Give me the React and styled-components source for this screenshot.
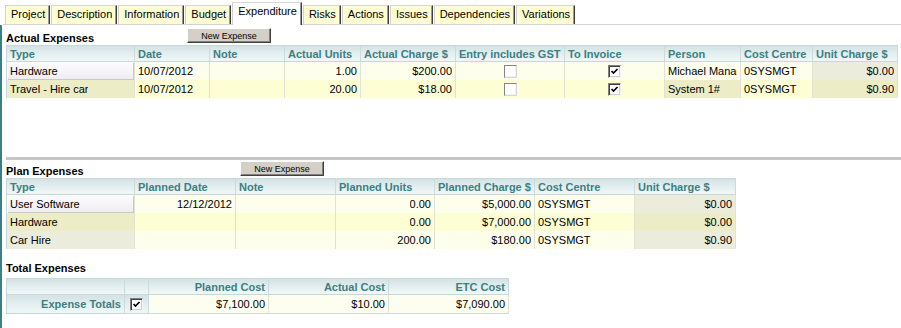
import React from "react";
import styled, { createGlobalStyle } from "styled-components";

const GlobalStyle = createGlobalStyle`
  html, body { margin: 0; padding: 0; background: #fff; }
  body { font-family: "Liberation Sans", Arial, sans-serif; font-size: 11px; color: #000; }
`;

const Page = styled.div`
  width: 901px;
  height: 328px;
  overflow: hidden;
  display: flex;
  flex-direction: column;
`;

const TabBar = styled.div`
  display: flex;
  align-items: flex-end;
  height: 24px;
  margin-left: 3px;
  padding-left: 2px;
  border-bottom: 1px solid #d4d4d4;
`;

const Tab = styled.div`
  box-sizing: border-box;
  margin-right: 1px;
  padding: 0 4px 0 5px;
  font-size: 11px;
  line-height: 17px;
  white-space: nowrap;
  border-left: 1px solid #cfcfcf;
  border-top: 1px solid #d6d6d6;
  border-right: 1px solid #3c3c3c;
  box-shadow: inset -1px 0 0 #9a9a9a;
  background: ${(p) => (p.$active ? "#ffffff" : "#fefed2")};
  height: ${(p) => (p.$active ? "23px" : "19px")};
  margin-bottom: ${(p) => (p.$active ? "-1px" : "0")};
`;

const Panel = styled.div`
  flex: 1;
  border-left: 2px solid #3e7d83;
  padding-left: 4px;
  display: flex;
  flex-direction: column;
`;

const SectionHead = styled.div`
  display: grid;
  grid-template-columns: ${(p) => p.$titleW}px auto;
  align-items: end;
  height: ${(p) => p.$h}px;
  padding-bottom: ${(p) => p.$pb || 0}px;
  box-sizing: border-box;
`;

const Title = styled.div`
  font-weight: bold;
  font-size: 11px;
  line-height: 13px;
  white-space: nowrap;
`;

const Button = styled.button`
  justify-self: start;
  box-sizing: border-box;
  width: 84px;
  height: 15px;
  padding: 0;
  margin: 0 0 2px 0;
  font: 9px "Liberation Sans", Arial, sans-serif;
  line-height: 12px;
  color: #000;
  background: #d4d0c8;
  border: 1px solid;
  border-color: #ffffff #404040 #404040 #ffffff;
  box-shadow: inset -1px -1px 0 #808080;
`;

const Separator = styled.div`
  height: 3px;
  margin-top: ${(p) => p.$mt}px;
  background: #c6c6c6;
`;

const Grid = styled.div`
  display: grid;
  grid-template-columns: ${(p) => p.$cols};
  width: max-content;
  border-left: 1px solid #c6d9da;
  border-top: 1px solid #c6d9da;
`;

const headBg = "linear-gradient(#d4e2e4, #e4eff0 55%, #f1f7f7)";

const HeadCell = styled.div`
  box-sizing: border-box;
  height: ${(p) => p.$h || 16}px;
  padding: 0 3px;
  display: flex;
  align-items: center;
  justify-content: ${(p) =>
    p.$align === "right" ? "flex-end" : p.$align === "center" ? "center" : "flex-start"};
  font-weight: bold;
  font-size: 11px;
  color: #3b7f82;
  white-space: nowrap;
  overflow: hidden;
  background: ${headBg};
  border-right: 1px solid #c9dbdc;
  border-bottom: 1px solid #c6d9da;
`;

const tones = {
  odd: "#fefeec",
  even: "#fefed4",
  oddSide: "#ececdd",
  evenSide: "#ececc6",
  total: "#fefef0",
  head: headBg,
  sel: "linear-gradient(#fdfcfd, #eeecef)",
};

const Cell = styled.div`
  box-sizing: border-box;
  height: ${(p) => p.$h || 18}px;
  padding: 0 3px;
  display: flex;
  align-items: center;
  justify-content: ${(p) =>
    p.$align === "right" ? "flex-end" : p.$align === "center" ? "center" : "flex-start"};
  white-space: nowrap;
  overflow: hidden;
  background: ${(p) => tones[p.$tone] || tones.odd};
  border-right: 1px solid ${(p) => (p.$tone === "head" ? "#c9dbdc" : "#e2e2d2")};
  border-bottom: ${(p) => (p.$last ? "1px solid #c9dbdc" : "0")};
  box-shadow: ${(p) =>
    p.$tone === "sel" ? "inset 1px 1px 0 #ffffff, inset -1px -1px 0 #c9c6cc" : "none"};
`;

const Clip = styled.span`
  display: block;
  overflow: hidden;
  white-space: nowrap;
  max-width: 100%;
`;

const Box = styled.span`
  display: inline-flex;
  box-sizing: border-box;
  width: 13px;
  height: 13px;
  margin-top: 1px;
  background: #fff;
  border: 1px solid;
  border-color: ${(p) =>
    p.$checked ? "#808080 #f2f2f2 #f2f2f2 #808080" : "#858585 #d6d6d6 #d6d6d6 #858585"};
  box-shadow: ${(p) =>
    p.$checked ? "inset 1px 1px 0 #404040, inset -1px -1px 0 #d4d0c8" : "inset -1px -1px 0 #f0f0f0"};
`;

const Check = ({ checked }) => (
  <Box $checked={checked}>
    {checked && (
      <svg width="11" height="11" viewBox="0 0 11 11" style={{ display: "block" }}>
        <path d="M2.5 5 L4.5 7 L8.5 3" stroke="#000" strokeWidth="1.7" fill="none" />
      </svg>
    )}
  </Box>
);

const tabs = [
  "Project",
  "Description",
  "Information",
  "Budget",
  "Expenditure",
  "Risks",
  "Actions",
  "Issues",
  "Dependencies",
  "Variations",
];

const actualCols = [128, 75, 75, 76, 95, 109, 100, 76, 72, 85];
const actualHead = [
  ["Type"],
  ["Date"],
  ["Note"],
  ["Actual Units"],
  ["Actual Charge $"],
  ["Entry includes GST"],
  ["To Invoice"],
  ["Person"],
  ["Cost Centre"],
  ["Unit Charge $"],
];
const actualRows = [
  [
    { v: "Hardware", t: "sel" },
    { v: "10/07/2012" },
    { v: "" },
    { v: "1.00", a: "right" },
    { v: "$200.00", a: "right" },
    { c: false },
    { c: true },
    { v: "Michael Manager" },
    { v: "0SYSMGT" },
    { v: "$0.00", a: "right", t: "side" },
  ],
  [
    { v: "Travel - Hire car", t: "side" },
    { v: "10/07/2012" },
    { v: "" },
    { v: "20.00", a: "right" },
    { v: "$18.00", a: "right" },
    { c: false },
    { c: true },
    { v: "System 1#", t: "side" },
    { v: "0SYSMGT" },
    { v: "$0.90", a: "right", t: "side" },
  ],
];

const planCols = [128, 101, 100, 99, 100, 100, 101];
const planHead = [
  ["Type"],
  ["Planned Date"],
  ["Note"],
  ["Planned Units"],
  ["Planned Charge $"],
  ["Cost Centre"],
  ["Unit Charge $"],
];
const planRows = [
  [
    { v: "User Software", t: "sel" },
    { v: "12/12/2012", a: "right" },
    { v: "" },
    { v: "0.00", a: "right" },
    { v: "$5,000.00", a: "right" },
    { v: "0SYSMGT" },
    { v: "$0.00", a: "right", t: "side" },
  ],
  [
    { v: "Hardware", t: "side" },
    { v: "" },
    { v: "" },
    { v: "0.00", a: "right" },
    { v: "$7,000.00", a: "right" },
    { v: "0SYSMGT" },
    { v: "$0.00", a: "right", t: "side" },
  ],
  [
    { v: "Car Hire", t: "side" },
    { v: "" },
    { v: "" },
    { v: "200.00", a: "right" },
    { v: "$180.00", a: "right" },
    { v: "0SYSMGT" },
    { v: "$0.90", a: "right", t: "side" },
  ],
];

const totalCols = [118, 24, 120, 120, 120];

const toneFor = (cell, rowIdx) => {
  const odd = rowIdx % 2 === 0;
  if (cell.t === "sel") return "sel";
  if (cell.t === "side") return odd ? "oddSide" : "evenSide";
  return odd ? "odd" : "even";
};

const DataTable = ({ cols, head, rows }) => (
  <Grid $cols={cols.map((w) => `${w}px`).join(" ")}>
    {head.map(([label, align], i) => (
      <HeadCell key={`h${i}`} $align={align}>
        {label}
      </HeadCell>
    ))}
    {rows.map((row, r) =>
      row.map((cell, i) => (
        <Cell
          key={`${r}-${i}`}
          $tone={toneFor(cell, r)}
          $align={cell.c !== undefined ? "center" : cell.a}
        >
          {cell.c !== undefined ? <Check checked={cell.c} /> : <Clip>{cell.v}</Clip>}
        </Cell>
      ))
    )}
  </Grid>
);

export default function App() {
  return (
    <Page>
      <GlobalStyle />
      <TabBar>
        {tabs.map((t) => (
          <Tab key={t} $active={t === "Expenditure"}>
            {t}
          </Tab>
        ))}
      </TabBar>
      <Panel>
        <SectionHead $titleW={181} $h={20}>
          <Title>Actual Expenses</Title>
          <Button type="button">New Expense</Button>
        </SectionHead>
        <DataTable cols={actualCols} head={actualHead} rows={actualRows} />

        <Separator $mt={59} />

        <SectionHead $titleW={234} $h={18}>
          <Title>Plan Expenses</Title>
          <Button type="button">New Expense</Button>
        </SectionHead>
        <DataTable cols={planCols} head={planHead} rows={planRows} />

        <SectionHead $titleW={200} $h={29} $pb={3}>
          <Title>Total Expenses</Title>
        </SectionHead>
        <Grid $cols={totalCols.map((w) => `${w}px`).join(" ")}>
          <HeadCell />
          <HeadCell />
          <HeadCell $align="right">Planned Cost</HeadCell>
          <HeadCell $align="right">Actual Cost</HeadCell>
          <HeadCell $align="right">ETC Cost</HeadCell>
          <HeadCell $align="right" $h={19}>
            Expense Totals
          </HeadCell>
          <Cell $tone="head" $align="center" $h={19} $last>
            <Check checked />
          </Cell>
          <Cell $tone="total" $align="right" $h={19} $last>
            $7,100.00
          </Cell>
          <Cell $tone="total" $align="right" $h={19} $last>
            $10.00
          </Cell>
          <Cell $tone="total" $align="right" $h={19} $last>
            $7,090.00
          </Cell>
        </Grid>
      </Panel>
    </Page>
  );
}
